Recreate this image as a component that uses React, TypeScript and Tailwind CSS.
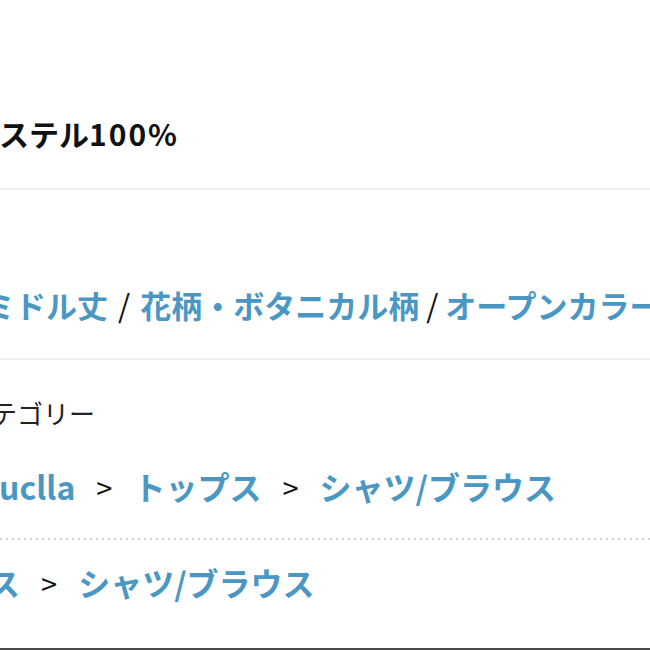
const font = "font-['Noto_Sans_CJK_JP','Noto_Sans',sans-serif]";

const Sep = () => (
  <span className="mx-[21px] text-[29px] font-normal text-[#111]">&gt;</span>
);

export default function App() {
  return (
    <div
      className={`w-[650px] h-[650px] overflow-hidden bg-white flex flex-col ${font}`}
    >
      <div className="pt-[113px] ml-[-91px] whitespace-nowrap text-[30px] leading-[40px] font-bold text-[#111]">
        ポリエステル<span className="tracking-[2px]">100%</span>
      </div>
      <div className="mt-[35px] h-[2px] bg-[#efefef]" />

      <div className="mt-[95px] ml-[-16px] whitespace-nowrap text-[31px] leading-[40px] font-bold text-[#4b97c3]">
        ミドル丈
        <span className="mx-[10px] text-[#111] font-normal">/</span>
        花柄・ボタニカル柄
        <span className="mx-[7px] text-[#111] font-normal">/</span>
        オープンカラー
      </div>
      <div className="mt-[33px] h-[2px] bg-[#efefef]" />

      <div className="mt-[35px] ml-[-35px] whitespace-nowrap text-[26px] leading-[36px] text-[#222]">
        カテゴリー
      </div>

      <div className="mt-[35px] ml-[-1px] flex items-center whitespace-nowrap text-[32px] leading-[40px] font-bold text-[#4b97c3]">
        <span>uclla</span>
        <Sep />
        <span>トップス</span>
        <Sep />
        <span>シャツ/ブラウス</span>
      </div>

      <div className="mt-[32px] h-[2px] bg-[repeating-linear-gradient(90deg,#d4d4d4_0_2px,transparent_2px_6px)]" />

      <div className="mt-[22px] ml-[-108px] flex items-center whitespace-nowrap text-[32px] leading-[40px] font-bold text-[#4b97c3]">
        <span>トップス</span>
        <Sep />
        <span>シャツ/ブラウス</span>
      </div>

      <div className="mt-auto h-[2px] bg-[#4a4a4a]" />
    </div>
  );
}
